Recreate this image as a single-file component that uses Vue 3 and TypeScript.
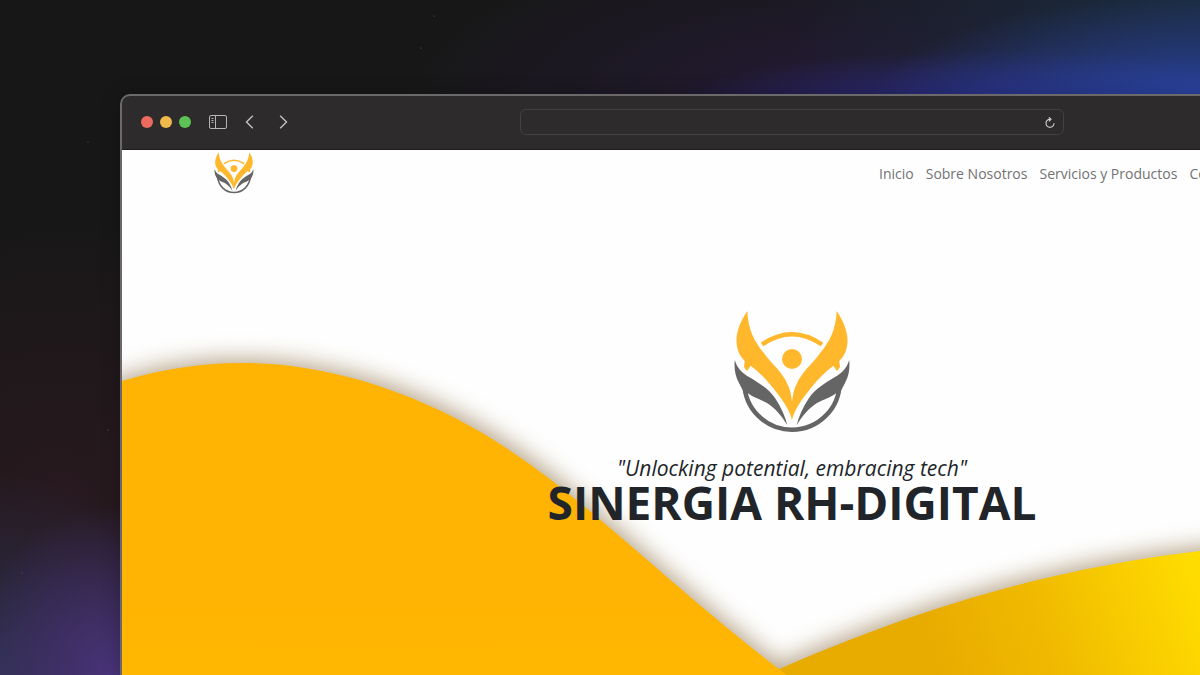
<script setup lang="ts">
const links = ['Inicio', 'Sobre Nosotros', 'Servicios y Productos', 'Contacto']
const lights = ['red', 'amber', 'green']
const stars = ['434,16', '421,48', '88,142', '108,430', '22,573'].map((p) => p.split(',').map(Number))
</script>

<template>
  <div class="desktop">
    <svg class="sky" aria-hidden="true">
      <circle v-for="[x, y] in stars" :key="x" :cx="x" :cy="y" r="0.6" fill="#66605f" />
    </svg>
    <svg class="defs" aria-hidden="true">
      <symbol id="emblem" viewBox="0 0 116 124">
        <g fill="#646564">
          <path d="M0.800 50C3 58 8 63 15 67C25 73 35 79 41 88C47 97 51 106 53.300 115C47 105 41 98 33 93C26 89 20 88 14.300 83.500L10 84C9 80 8 79 5 73C1 66 0 58 0.800 50Z" />
          <path d="M115.200 50C113 58 108 63 101 67C91 73 81 79 75 88C69 97 65 106 62.700 115C69 105 75 98 83 93C90 89 96 88 101.700 83.500L106 84C107 80 108 79 111 73C115 66 116 58 115.200 50Z" />
        </g>
        <path d="M10.500 76A47.500 47 0 0 0 105.500 76" transform="translate(0 -3.300)" fill="none" stroke="#646564" stroke-width="4.500" />
        <g fill="#ffb72b">
          <path d="M13.300 1C3 16 -1 32 6 45C9 50 13 53 17 56C25 62 32 69 39 78C47 88 55 98 58 110C61 98 69 88 77 78C84 69 91 62 99 56C103 53 107 50 110 45C117 32 113 16 102.700 1C102 20 95 32 87 42C82 49 75 56 70 62C63 71 59 80 58 92C57 80 53 71 46 62C41 56 34 49 29 42C21 32 14 20 13.300 1Z" />
          <circle cx="58" cy="49" r="10" />
          <path d="M11 49L10 57L13 61L18 54ZM105 49L106 57L103 61L98 54Z" />
        </g>
        <path d="M28 34.500Q58 14 88 34.500" fill="none" stroke="#ffb72b" stroke-width="4.500" />
      </symbol>
    </svg>

    <section class="window">
      <div class="toolbar">
        <div class="controls">
          <div class="lights">
            <button v-for="c in lights" :key="c" type="button" class="light" :class="c" :aria-label="c"></button>
          </div>
          <button type="button" class="tool" aria-label="Sidebar">
            <svg width="18" height="14" viewBox="0 0 18 14" fill="none" stroke="#b7b4b4">
              <rect x="0.500" y="0.500" width="17" height="13" rx="1.500" />
              <path d="M6.500 .5V13.500M2.500 3.500H4.500M2.500 5.500H4.500M2.500 7.500H4.500" />
            </svg>
          </button>
          <button type="button" class="tool back" aria-label="Back">
            <svg width="9" height="14" viewBox="0 0 9 14" fill="none" stroke="#c3c0c0" stroke-width="1.400"><path d="M7.800 .8L1.500 7L7.800 13.200" /></svg>
          </button>
          <button type="button" class="tool forward" aria-label="Forward">
            <svg width="9" height="14" viewBox="0 0 9 14" fill="none" stroke="#c3c0c0" stroke-width="1.400"><path d="M1.200 .8L7.500 7L1.200 13.200" /></svg>
          </button>
        </div>
        <div class="address">
          <input type="text" aria-label="Address" />
          <button type="button" class="tool" aria-label="Reload">
            <svg width="10" height="11" viewBox="0 0 10 11" fill="none" stroke="#dddada" stroke-width="1.100"><path d="M5 2.200A4 4 0 1 0 9 6.200M3.800 .3L6 2.300L3.900 4.300" /></svg>
          </button>
        </div>
        <div></div>
      </div>

      <div class="site">
        <svg class="waves" viewBox="0 0 1344 526" preserveAspectRatio="xMinYMin slice" aria-hidden="true">
          <defs>
            <linearGradient id="orange" x1="0" y1="0" x2="0" y2="1">
              <stop offset="0.600" stop-color="#ffb302" />
              <stop offset="1" stop-color="#ffbb00" />
            </linearGradient>
            <linearGradient id="yellow" gradientUnits="userSpaceOnUse" x1="820" y1="530" x2="1080" y2="440">
              <stop offset="0" stop-color="#e8ab00" />
              <stop offset="0.400" stop-color="#f0b900" />
              <stop offset="1" stop-color="#ffdc00" />
            </linearGradient>
            <filter id="soft" x="-20%" y="-20%" width="140%" height="140%"><feGaussianBlur stdDeviation="11" /></filter>
          </defs>
          <g filter="url(#soft)" fill="#846535" opacity="0.550">
            <path d="M640 522C800 451 930 414 1078 397C1180 386 1280 396 1400 426V600H640Z" />
            <path d="M-60 256L0 227C90 198 180 206 262 232C422 286 492 386 664 518L764 600H-60Z" />
          </g>
          <path d="M640 528C800 457 930 420 1078 402C1180 392 1280 402 1400 432V600H640Z" fill="url(#yellow)" />
          <path d="M-2 232C80 207 160 208 236 230C406 279 480 382 658 520L750 592H-2Z" fill="url(#orange)" />
        </svg>
        <header class="header">
          <a href="#" class="brand" aria-label="Sinergia RH-Digital"><svg width="40" height="42"><use href="#emblem" /></svg></a>
          <nav class="nav"><a v-for="l in links" :key="l" href="#">{{ l }}</a></nav>
        </header>
        <main class="hero">
          <svg class="mark" width="116" height="124" aria-hidden="true"><use href="#emblem" /></svg>
          <p>"Unlocking potential, embracing tech"</p>
          <h1>SINERGIA RH-DIGITAL</h1>
        </main>
      </div>
    </section>
  </div>
</template>

<style>
body { margin: 0; background: #171717; }
</style>

<style scoped>
* { box-sizing: border-box; }
.desktop {
  position: relative;
  display: flex;
  min-height: 100vh;
  padding: 94px 0 0 10%;
  overflow: hidden;
  font-family: "Open Sans", "Noto Sans", sans-serif;
  background:
    radial-gradient(ellipse 140px 170px at 110px 100%, #49337a 0%, rgba(73, 51, 122, 0) 100%),
    radial-gradient(ellipse 200px 200px at 0 100%, #303152 0%, rgba(48, 49, 82, 0) 100%),
    radial-gradient(ellipse 340px 290px at 60px 500px, #28191f 0%, rgba(40, 25, 31, 0) 100%),
    radial-gradient(ellipse 330px 110px at 100% 104px, #2a44a4 0%, rgba(42, 68, 164, 0) 100%),
    radial-gradient(ellipse 340px 60px at 1000px 110px, #2b2b88 0%, rgba(43, 43, 136, 0) 100%),
    radial-gradient(ellipse 420px 240px at 100% 0, #1b2c40 0%, rgba(27, 44, 64, 0) 100%),
    radial-gradient(ellipse 450px 160px at 850px 94px, #241a35 0%, rgba(36, 26, 53, 0) 100%),
    #171717;
}
.sky { position: absolute; inset: 0; width: 100%; height: 100%; }
.defs { position: absolute; width: 0; height: 0; }
.window {
  position: relative;
  display: flex;
  flex: 0 0 calc(100% / 0.9 * 1.12);
  flex-direction: column;
  border: 2px solid #6c696a;
  border-bottom: 0;
  border-radius: 10px 10px 0 0;
  background: #2e2b2c;
  box-shadow: 0 0 20px rgba(0, 0, 0, 0.2);
  overflow: hidden;
}
.toolbar {
  display: grid;
  grid-template-columns: 1fr 544px 1fr;
  align-items: center;
  height: 54px;
  padding-bottom: 1px;
  border-bottom: 1px solid #1c1a1b;
}
.controls, .lights { display: flex; align-items: center; }
.controls { padding-left: 19px; }
.lights { gap: 7px; margin-right: 18px; }
.light { width: 12px; height: 12px; padding: 0; border: 0; border-radius: 50%; }
.red { background: #ec6a5e; }
.amber { background: #f0b94b; }
.green { background: #5dc254; }
.tool { display: flex; padding: 0; border: 0; background: none; }
.back { margin-left: 18px; }
.forward { margin-left: 25px; }
.address {
  display: flex;
  align-items: center;
  height: 26px;
  padding: 0 8px;
  border: 1px solid #454142;
  border-radius: 6px;
}
.address input { flex: 1; min-width: 0; border: 0; outline: 0; background: none; color: #ddd; }
.site { position: relative; flex: 1; background: #fefefe; overflow: hidden; }
.waves { position: absolute; inset: 0; width: 100%; height: 100%; }
.header {
  position: relative;
  display: grid;
  grid-template-columns: 1fr 491px;
  align-items: center;
  height: 48px;
  padding: 0 92px;
}
.brand { display: flex; height: 44px; }
.nav { display: flex; gap: 12px; }
.nav a { color: #717273; font-size: 14px; line-height: 20px; text-decoration: none; white-space: nowrap; }
.hero { position: relative; display: flex; flex-direction: column; align-items: center; padding-top: 112px; color: #212529; }
.hero p { margin: 20px 0 0; font-size: 21px; line-height: 28px; font-style: italic; }
.hero h1 { margin: 0; font-size: 46px; line-height: 40px; font-weight: 700; white-space: nowrap; }
</style>
